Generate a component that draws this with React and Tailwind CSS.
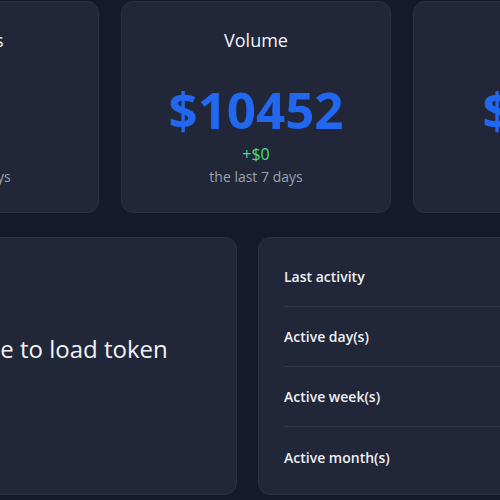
export default function App() {
  const stats = [
    { title: "Transfers", value: "42", change: "+0", sub: "the last 7 days" },
    { title: "Volume", value: "$10452", change: "+$0", sub: "the last 7 days" },
    { title: "Fees", value: "$4.52", change: "+$0", sub: "the last 7 days" },
  ];

  const rows = ["Last activity", "Active day(s)", "Active week(s)", "Active month(s)"];

  return (
    <div className="h-screen overflow-hidden bg-[#141a2b] font-['Open_Sans',sans-serif]">
      <div className="-ml-[171px] w-[854px] pt-[1px]">
        <div className="flex gap-[22px]">
          {stats.map((s) => (
            <div
              key={s.title}
              className="w-[270px] h-[212px] shrink-0 rounded-xl border border-[#2c3244] bg-[#212738] flex flex-col items-center pt-[26px]"
            >
              <div className="text-[18px] leading-6 text-[#f1f3f7]">{s.title}</div>
              <div className="mt-[27px] text-[51px] leading-[60px] font-bold text-[#2167f0]">
                {s.value}
              </div>
              <div className="mt-[5px] text-[16px] leading-5 text-[#4ade80]">{s.change}</div>
              <div className="mt-[3px] text-[14px] leading-5 text-[#9aa1ae]">{s.sub}</div>
            </div>
          ))}
        </div>

        <div className="mt-[24px] flex gap-[21px]">
          <div className="w-[408px] h-[258px] shrink-0 rounded-xl border border-[#2c3244] bg-[#212738] flex items-center pl-[104px] pb-[34px]">
            <div className="text-[24px] text-[#f1f3f7]">Unable to load token</div>
          </div>
          <div className="w-[425px] h-[258px] shrink-0 rounded-xl border border-[#2c3244] bg-[#212738] px-[25px] py-[9px]">
            {rows.map((r, i) => (
              <div
                key={r}
                className={
                  "h-[60px] flex items-center text-[14px] font-semibold text-[#eef0f4] " +
                  (i < rows.length - 1 ? "border-b border-[#2f3547]" : "")
                }
              >
                {r}
              </div>
            ))}
          </div>
        </div>
      </div>
    </div>
  );
}
